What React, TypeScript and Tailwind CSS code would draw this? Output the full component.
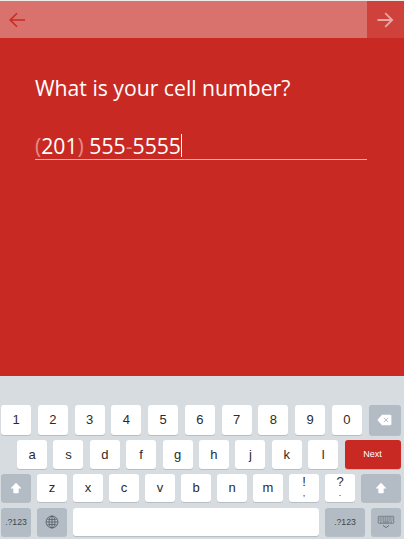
import type { ReactNode } from "react";

const keyBase =
  "flex h-full shrink-0 items-center justify-center rounded-[3px] shadow-[0_1px_0_#b9bec3] leading-none";

function Key({ children, className = "w-[30px]" }: { children?: ReactNode; className?: string }) {
  return <div className={`${keyBase} bg-white pb-px text-[13px] text-[#2b2b2b] ${className}`}>{children}</div>;
}

function GreyKey({ children, className = "w-[30px]" }: { children?: ReactNode; className?: string }) {
  return <div className={`${keyBase} bg-[#b3bcc4] text-[8.7px] text-[#3f454a] ${className}`}>{children}</div>;
}

function Shift() {
  return (
    <svg width="12" height="12" viewBox="0 0 12 12" fill="#fff">
      <path d="M6 .7 11.5 6.4H8.7v4.2q0 .7-.7.7H4q-.7 0-.7-.7V6.4H.5Z" />
    </svg>
  );
}

function Punctuation({ top, bottom }: { top: string; bottom: string }) {
  return (
    <Key>
      <div className="flex flex-col items-center">
        <span className="h-[14px] leading-[14px]">{top}</span>
        <span className="h-[11px] text-[9px] leading-[9px]">{bottom}</span>
      </div>
    </Key>
  );
}

export default function App() {
  return (
    <div className="flex h-[539px] w-[404px] flex-col overflow-hidden bg-[#d7dce0] font-['Liberation_Sans',Arial,sans-serif]">
      <div className="h-px shrink-0 bg-[#eeeae8]" />
      <header className="flex h-[37px] shrink-0">
        <div className="flex flex-1 items-center bg-[#d9716c] pl-[9px]">
          <svg width="17" height="16" viewBox="0 0 17 16" fill="none" stroke="#c92a23" strokeWidth="1.6">
            <path d="M16 8H1.5M8 1.2 1.2 8 8 14.8" />
          </svg>
        </div>
        <div className="flex w-[37px] items-center bg-[#cf413b] pl-[10px]">
          <svg width="17" height="16" viewBox="0 0 17 16" fill="none" stroke="#eba9a5" strokeWidth="1.8">
            <path d="M.5 8h14.8M8.2 1.1 15.2 8l-7 6.9" />
          </svg>
        </div>
      </header>
      <main className="h-[337.5px] shrink-0 bg-[#c82a23] pl-[35px] pr-[37px] pt-[34px] font-['Open_Sans','Noto_Sans',sans-serif] text-[21.2px] text-white">
        <h1 className="h-8 whitespace-nowrap leading-8">What is your cell number?</h1>
        <div className="mt-[26px] flex h-[30px] items-center border-b border-[#eeb1ae] pt-[2px] leading-none">
          <span className="whitespace-pre">
            <span className="text-[#e58b87]">(</span>201<span className="text-[#e58b87]">)</span> 555
            <span className="text-[#e58b87]">-</span>5555
          </span>
          <span className="h-[23px] w-px bg-white" />
        </div>
      </main>
      <section className="flex flex-col px-px pt-[29.5px]">
        <div className="flex h-[30px] gap-[6.75px]">
          {"1234567890".split("").map((k) => (
            <Key key={k}>{k}</Key>
          ))}
          <GreyKey className="w-8">
            <svg width="15" height="12" viewBox="0 0 15 12">
              <path d="M5 .7h8q1.4 0 1.4 1.4v7.8q0 1.4-1.4 1.4H5L.4 6Z" fill="#fff" />
              <path d="m6.9 3.8 4.2 4.2m0-4.2L6.9 8" stroke="#b3bcc4" strokeWidth="1" />
            </svg>
          </GreyKey>
        </div>
        <div className="mt-[5px] flex h-[29px] gap-[6.4px] pl-4">
          {"asdfghjkl".split("").map((k) => (
            <Key key={k}>{k}</Key>
          ))}
          <div className={`${keyBase} w-14 bg-[#c82a23] text-[9px] text-white`}>Next</div>
        </div>
        <div className="mt-[5px] flex h-[28px] gap-1.5">
          <GreyKey>
            <Shift />
          </GreyKey>
          {"zxcvbnm".split("").map((k) => (
            <Key key={k}>{k}</Key>
          ))}
          <Punctuation top="!" bottom="," />
          <Punctuation top="?" bottom="." />
          <GreyKey className="w-10">
            <Shift />
          </GreyKey>
        </div>
        <div className="mt-1.5 flex h-[28px] gap-1.5">
          <GreyKey>.?123</GreyKey>
          <GreyKey>
            <svg width="14" height="14" viewBox="0 0 14 14" fill="none" stroke="#4a5056" strokeWidth=".7">
              <circle cx="7" cy="7" r="6" />
              <ellipse cx="7" cy="7" rx="3" ry="6" />
              <path d="M7 1v12M1 7h12M2 4q5 1.4 10 0M2 10q5-1.4 10 0" />
            </svg>
          </GreyKey>
          <Key className="w-[246px]" />
          <GreyKey className="w-10">.?123</GreyKey>
          <GreyKey>
            <svg width="18" height="14" viewBox="0 0 18 14" fill="none" stroke="#60676d">
              <rect x="1.3" y="1.3" width="15.4" height="7" rx=".6" strokeWidth=".7" />
              <path d="M2.5 3h13M2.5 5h13" strokeWidth="1" strokeDasharray="1.2 .6" />
              <path d="M3 7h1.5M5.5 7h7M13.5 7h1.5" strokeWidth=".9" />
              <path d="m6 10.3 3 2.4 3-2.4" strokeWidth=".9" />
            </svg>
          </GreyKey>
        </div>
      </section>
    </div>
  );
}
